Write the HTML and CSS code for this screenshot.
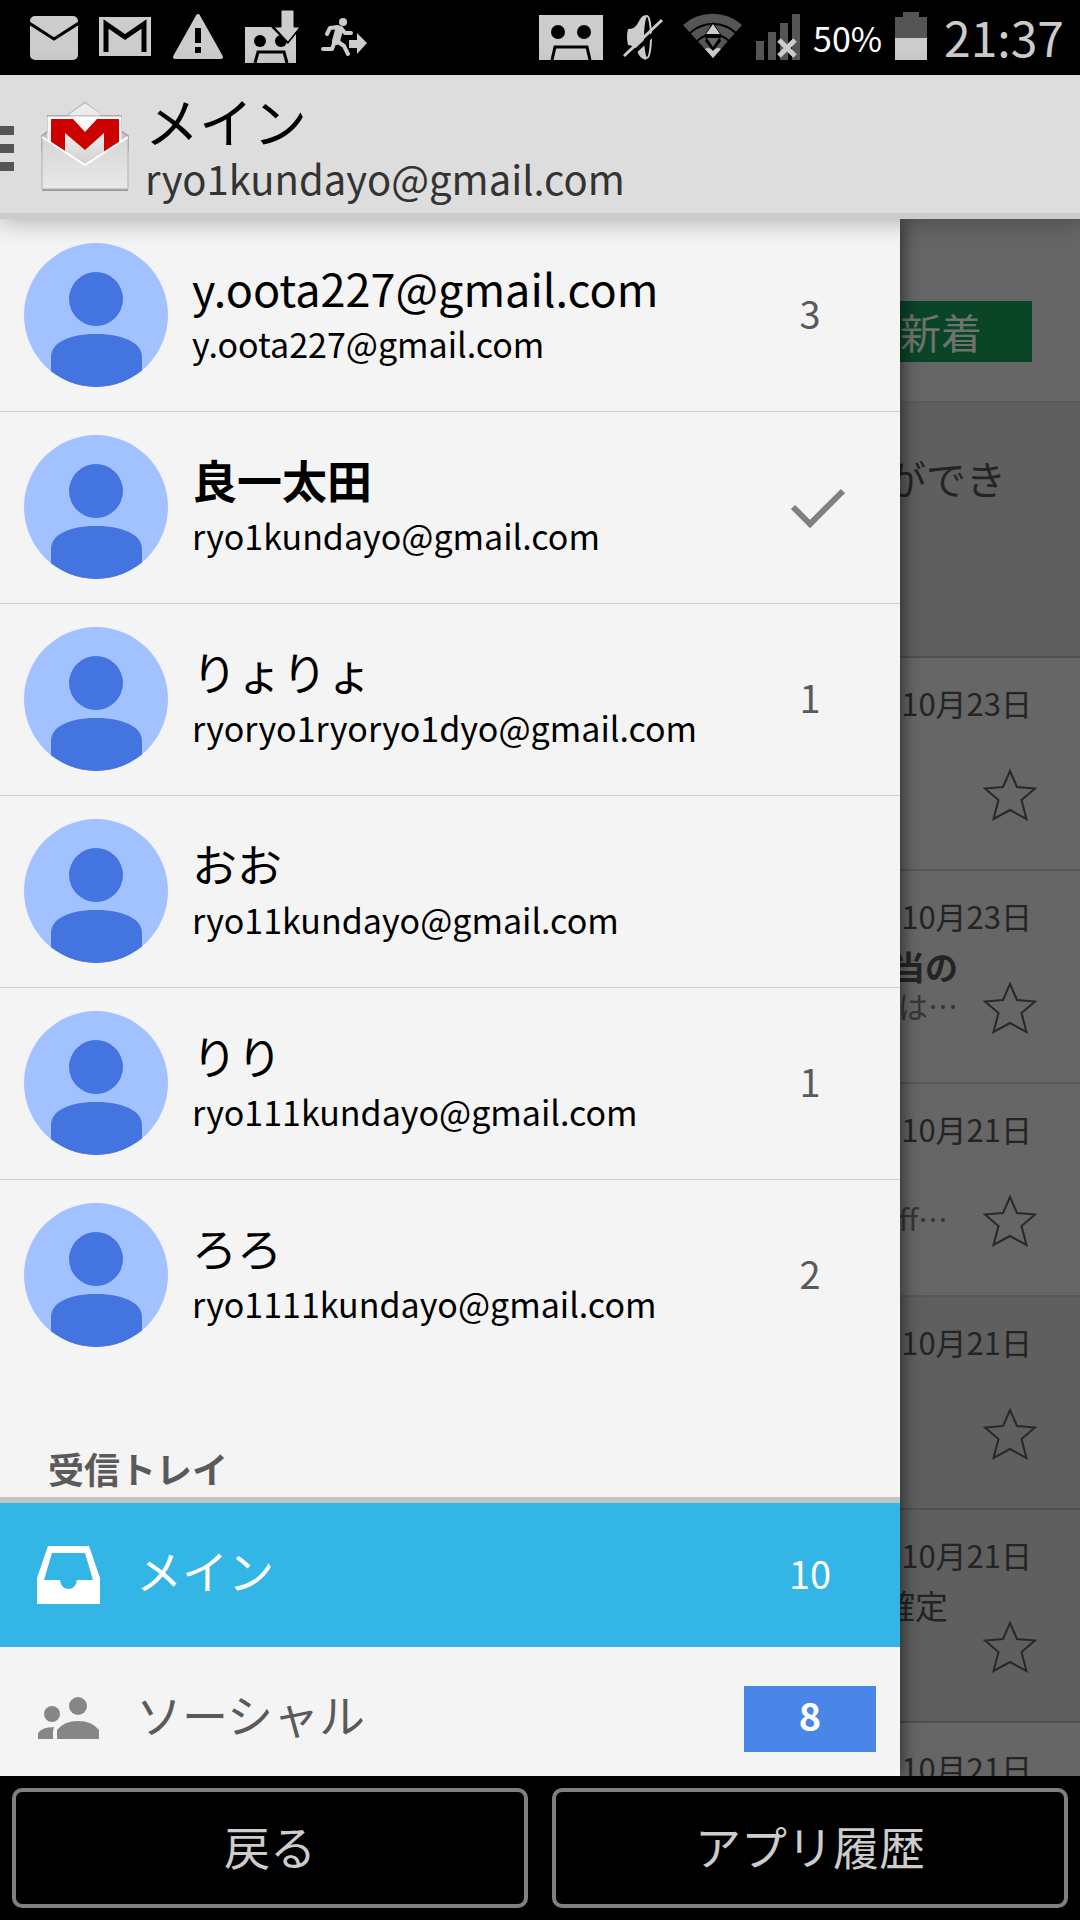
FILE: index.html
```html
<!DOCTYPE html>
<html lang="ja">
  <head>
    <meta charset="UTF-8" />
    <meta name="viewport" content="width=device-width, initial-scale=1.0" />
    <title>メイン</title>
    <link rel="stylesheet" href="styles.css">
  </head>
  <body>
    <!-- Shared shapes -->
    <svg class="defs" aria-hidden="true">
      <symbol id="avatar" viewBox="0 0 144 144">
        <clipPath id="round"><circle cx="72" cy="72" r="72" /></clipPath>
        <g clip-path="url(#round)">
          <rect width="144" height="144" fill="#a1c2ff" />
          <circle cx="72" cy="56" r="27" fill="#4374e0" />
          <path d="M27 144V114C27 98 49 91 72 91S118 98 118 114V144Z" fill="#4374e0" />
        </g>
      </symbol>
      <symbol id="star" viewBox="0 0 56 54">
        <path d="M28 3L35 19L53 20.500L39.500 32L44.500 51L28 42L11.500 51L16.500 32L3 20.500L21 19Z" fill="none" stroke="#282828" stroke-width="2" />
      </symbol>
    </svg>

    <div class="screen">
      <!-- Status bar -->
      <div class="status-bar">
        <div class="notifications">
          <svg width="48" height="75" viewBox="30 0 48 75">
            <rect x="30" y="16" width="48" height="44" rx="5" fill="#ccc" />
            <path d="M29 23L54 39L79 23" fill="none" stroke="#000" stroke-width="3" />
          </svg>
          <svg width="52" height="75" viewBox="99 0 52 75">
            <rect x="99" y="17" width="52" height="39" fill="#ccc" />
            <path d="M106 52V24L125 37L144 24V52" fill="none" stroke="#000" stroke-width="5" />
          </svg>
          <svg width="52" height="75" viewBox="172 0 52 75">
            <path d="M198 16L221 57H175Z" fill="#ccc" stroke="#ccc" stroke-width="4" stroke-linejoin="round" />
            <path d="M198 28V43M198 47V53" stroke="#000" stroke-width="6" />
          </svg>
          <svg width="55" height="75" viewBox="242 0 55 75">
            <path d="M242 27H268L285 44L293 34V63H242Z" fill="#ccc" />
            <circle cx="257" cy="41" r="6" />
            <circle cx="278" cy="41" r="6" />
            <path d="M252 63L255 52H281L284 63" fill="none" stroke="#000" stroke-width="3" />
            <path d="M278 10H291V27H297L285 42L271 27H278Z" fill="#ccc" stroke="#000" stroke-width="1" />
          </svg>
          <svg width="46" height="75" viewBox="320 0 46 75">
            <circle cx="342" cy="22" r="4" fill="#ccc" />
            <path d="M338 30L335 41" stroke="#ccc" stroke-width="8" stroke-linecap="round" />
            <path d="M337 27L329 28L326 34M340 28L344 33L350 33M334 41L331 49H322M336 41L343 46L347 54" fill="none" stroke="#ccc" stroke-width="4" stroke-linecap="round" stroke-linejoin="round" />
            <path d="M348 40H356V33L366 43L356 54V48H348Z" fill="#ccc" />
          </svg>
        </div>
        <div class="system">
          <svg width="64" height="75" viewBox="539 0 64 75">
            <rect x="539" y="15" width="64" height="45" fill="#ccc" />
            <circle cx="558" cy="32" r="7" />
            <circle cx="584" cy="32" r="7" />
            <path d="M552 60L555 47H587L590 60" fill="none" stroke="#000" stroke-width="3" />
          </svg>
          <svg width="54" height="75" viewBox="617 0 54 75">
            <path d="M629 29Q636 30 640 21Q643 15 647 15V60Q641 59 638 51Q635 45 629 45Q627 37 629 29Z" fill="#ccc" />
            <ellipse cx="648" cy="37" rx="4" ry="21" fill="#000" stroke="#ccc" stroke-width="2" />
            <path d="M627 60L665 24" stroke="#000" stroke-width="4" />
            <path d="M625 56L663 20" stroke="#ccc" stroke-width="3" />
          </svg>
          <svg width="60" height="75" viewBox="685 0 60 75">
            <path d="M685 25A44 44 0 0 1 744 25L715 58Z" fill="#555" />
            <path d="M692 33A34 34 0 0 1 738 33M699 41A23 23 0 0 1 731 41" fill="none" stroke="#000" stroke-width="2" />
            <path d="M706 36L715 22L724 36L722 39L723 41L715 51L707 41L708 39Z" fill="#000" />
            <path d="M708 34L715 24L722 34ZM707 49Q711 46 715 51Q719 46 723 49L715 58Z" fill="#ccc" />
            <path d="M709 38H721L715 47Z" fill="#666" />
          </svg>
          <svg width="44" height="75" viewBox="755 0 44 75">
            <path d="M755 41H763V60H755ZM767 32H775V60H767ZM779 23H787V60H779ZM791 14H799V60H791Z" fill="#555" />
            <path d="M778 40L794 56M794 40L778 56" stroke="#ccc" stroke-width="5" />
          </svg>
          <span class="battery-level">50%</span>
          <svg width="32" height="75" viewBox="892 0 32 75">
            <path d="M892 17H900V12H916V17H924V38H892Z" fill="#555" />
            <rect x="892" y="38" width="32" height="22" fill="#ccc" />
          </svg>
          <time class="clock">21:37</time>
        </div>
      </div>

      <!-- Action bar -->
      <header class="action-bar">
        <button class="menu-button" type="button" aria-label="メニュー">
          <svg width="14" height="45" viewBox="0 0 14 45">
            <path d="M0 0H14V9H0ZM0 18H14V27H0ZM0 36H14V45H0Z" fill="#555" />
          </svg>
        </button>
        <svg class="logo" width="90" height="96" viewBox="40 98 90 96">
          <defs>
            <linearGradient id="paper" x1="0" y1="0" x2="0" y2="1">
              <stop offset="0" stop-color="#fff" />
              <stop offset="1" stop-color="#ccc" />
            </linearGradient>
            <linearGradient id="envelope" x1="0" y1="0" x2="0" y2="1">
              <stop offset="0" stop-color="#d6d6d6" />
              <stop offset="1" stop-color="#e8e8e8" />
            </linearGradient>
          </defs>
          <path d="M42 190H128" stroke="#999" stroke-width="2" />
          <path d="M42 136L48 131V116H67L85 103L102 116H121V131L128 136V150H42Z" fill="#c4c4c4" stroke="#aaa" stroke-width="2" />
          <path d="M68 115L85 103L102 115Z" fill="#ececec" />
          <path d="M48 117H121V145L85 168L48 145Z" fill="url(#paper)" stroke="#fafafa" stroke-width="1" />
          <path d="M51 119H73L85 132L97 119H119V154H104V133L85 150L65 133V154H51Z" fill="#cd0000" />
          <path d="M42 137L85 165L128 137V189H42Z" fill="url(#envelope)" stroke="#b0b0b0" stroke-width="1" />
          <path d="M42 137L85 165L128 137" fill="none" stroke="#fff" stroke-width="2" />
        </svg>
        <div class="title">
          <h1>メイン</h1>
          <p>ryo1kundayo@gmail.com</p>
        </div>
      </header>

      <div class="stage">
        <!-- Mail list, dimmed under the drawer -->
        <main class="mail-list">
          <div class="promo"><span class="new-badge">新着</span></div>
          <div class="tip">ができ</div>
          <article class="mail">
            <time>10月23日</time>
            <div class="excerpt"></div>
            <button class="star" type="button" aria-label="スター"><svg><use href="#star" /></svg></button>
          </article>
          <article class="mail">
            <time>10月23日</time>
            <div class="excerpt"><strong>当の</strong><span>りは…</span></div>
            <button class="star" type="button" aria-label="スター"><svg><use href="#star" /></svg></button>
          </article>
          <article class="mail">
            <time>10月21日</time>
            <div class="excerpt short"><b></b><span>ff…</span></div>
            <button class="star" type="button" aria-label="スター"><svg><use href="#star" /></svg></button>
          </article>
          <article class="mail read">
            <time>10月21日</time>
            <div class="excerpt"></div>
            <button class="star" type="button" aria-label="スター"><svg><use href="#star" /></svg></button>
          </article>
          <article class="mail read">
            <time>10月21日</time>
            <div class="excerpt short"><b>確定</b></div>
            <button class="star" type="button" aria-label="スター"><svg><use href="#star" /></svg></button>
          </article>
          <article class="mail">
            <time>10月21日</time>
          </article>
        </main>

        <!-- Navigation drawer -->
        <nav class="drawer">
          <ul class="accounts">
            <li>
              <a class="account" href="#">
                <svg class="avatar"><use href="#avatar" /></svg>
                <span class="who"><span class="name">y.oota227@gmail.com</span><span class="email">y.oota227@gmail.com</span></span>
                <span class="count">3</span>
              </a>
            </li>
            <li>
              <a class="account current" href="#">
                <svg class="avatar"><use href="#avatar" /></svg>
                <span class="who"><span class="name">良一太田</span><span class="email">ryo1kundayo@gmail.com</span></span>
                <svg class="check" width="132" height="60" viewBox="0 0 132 60">
                  <path d="M49 30L66 47L99 14" fill="none" stroke="#808080" stroke-width="6" />
                </svg>
              </a>
            </li>
            <li>
              <a class="account" href="#">
                <svg class="avatar"><use href="#avatar" /></svg>
                <span class="who"><span class="name">りょりょ</span><span class="email">ryoryo1ryoryo1dyo@gmail.com</span></span>
                <span class="count">1</span>
              </a>
            </li>
            <li>
              <a class="account" href="#">
                <svg class="avatar"><use href="#avatar" /></svg>
                <span class="who"><span class="name">おお</span><span class="email">ryo11kundayo@gmail.com</span></span>
              </a>
            </li>
            <li>
              <a class="account" href="#">
                <svg class="avatar"><use href="#avatar" /></svg>
                <span class="who"><span class="name">りり</span><span class="email">ryo111kundayo@gmail.com</span></span>
                <span class="count">1</span>
              </a>
            </li>
            <li>
              <a class="account" href="#">
                <svg class="avatar"><use href="#avatar" /></svg>
                <span class="who"><span class="name">ろろ</span><span class="email">ryo1111kundayo@gmail.com</span></span>
                <span class="count">2</span>
              </a>
            </li>
          </ul>

          <h2>受信トレイ</h2>
          <a class="folder active" href="#">
            <svg width="64" height="60" viewBox="0 0 64 60">
              <path fill="#fff" fill-rule="evenodd" d="M12 1H53L64 33V59H1V33ZM16 8L8 35H24C25 47 40 47 41 35H57L49 8Z" />
            </svg>
            <span class="label">メイン</span>
            <span class="count">10</span>
          </a>
          <a class="folder" href="#">
            <svg width="64" height="60" viewBox="0 0 64 60">
              <g fill="#868686">
                <circle cx="16" cy="25" r="8" />
                <circle cx="42" cy="17" r="9" />
                <path d="M2 50V44Q6 38 18 38Q17 41 17 44V50ZM21 50V41Q28 32 42 32T63 41V50Z" />
              </g>
            </svg>
            <span class="label">ソーシャル</span>
            <span class="count badge">8</span>
          </a>
        </nav>
      </div>

      <!-- System buttons -->
      <footer class="system-nav">
        <button type="button">戻る</button>
        <button type="button">アプリ履歴</button>
      </footer>
    </div>
  </body>
</html>
```
FILE: styles.css
```css
* {
  box-sizing: border-box;
}

body {
  margin: 0;
  background: #000;
  font-family: "Noto Sans CJK JP", sans-serif;
}

h1,
h2,
p,
ul {
  margin: 0;
  padding: 0;
}

a {
  color: inherit;
  text-decoration: none;
}

button {
  font-family: inherit;
  cursor: pointer;
}

.defs {
  position: absolute;
  width: 0;
  height: 0;
}

.screen {
  display: flex;
  flex-direction: column;
  height: 100vh;
}

/* Status bar */
.status-bar {
  display: flex;
  justify-content: space-between;
  height: 75px;
  padding: 0 16px 0 30px;
  background: #000;
  color: #ccc;
}

.notifications,
.system {
  display: flex;
  align-items: center;
}

.notifications {
  gap: 21px;
}

.system {
  gap: 13px;
}

.battery-level {
  color: #fff;
  font-size: 34px;
}

.clock {
  margin-left: 4px;
  font-size: 48px;
  line-height: 70px;
  padding-bottom: 4px;
}

/* Action bar */
.action-bar {
  display: flex;
  align-items: center;
  height: 144px;
  padding-top: 4px;
  background: #ddd;
  border-bottom: 6px solid #ccc;
  box-shadow: 0 2px 24px rgba(0, 0, 0, 0.3);
  position: relative;
  z-index: 2;
}

.menu-button {
  display: flex;
  padding: 4px 0 0;
  border: none;
  background: none;
}

.logo {
  margin-left: 26px;
}

.title {
  margin-left: 15px;
}

.title h1 {
  font-size: 54px;
  font-weight: 400;
  line-height: 64px;
  color: #000;
}

.title p {
  font-size: 40px;
  line-height: 50px;
  color: #333;
}

/* Area below the action bar */
.stage {
  position: relative;
  flex: 1;
  min-height: 0;
  overflow: hidden;
  background: #666;
}

.mail-list {
  color: #242424;
}

.promo {
  display: flex;
  justify-content: flex-end;
  align-items: flex-start;
  height: 184px;
  padding: 82px 48px 0 0;
  border-bottom: 2px solid #5a5a5a;
}

.new-badge {
  padding: 0 50px;
  background: #0a4528;
  color: #6f736f;
  font-size: 41px;
  line-height: 61px;
}

.tip {
  height: 255px;
  padding: 45px 74px 0 0;
  border-bottom: 2px solid #505050;
  background: #5f5f5f;
  font-size: 40px;
  line-height: 60px;
  text-align: right;
}

.mail {
  display: grid;
  grid-template-columns: 1fr 56px;
  grid-template-rows: 44px 1fr;
  column-gap: 24px;
  height: 213px;
  padding: 23px 42px 20px 0;
  border-bottom: 2px solid #585858;
}

.mail.read {
  background: #5f5f5f;
  border-color: #505050;
}

.mail time {
  grid-column: 1 / 3;
  padding-right: 6px;
  font-size: 31px;
  line-height: 44px;
  text-align: right;
}

.excerpt {
  display: flex;
  flex-direction: column;
  padding-top: 8px;
  font-size: 33px;
  line-height: 40px;
  text-align: right;
}

.excerpt span {
  font-size: 30px;
  line-height: 38px;
  color: #363636;
}

.excerpt.short {
  padding-right: 10px;
}

.excerpt b {
  min-height: 40px;
  font-weight: 400;
}

.star {
  align-self: start;
  margin-top: 43px;
  padding: 0;
  border: none;
  background: none;
}

.star svg {
  display: block;
  width: 56px;
  height: 54px;
}

/* Drawer */
.drawer {
  position: absolute;
  top: 0;
  bottom: 0;
  left: 0;
  right: 180px;
  background: #f4f4f4;
  box-shadow: 0 0 18px rgba(0, 0, 0, 0.7);
  color: #000;
}

.accounts {
  padding-top: 1px;
  list-style: none;
}

.account {
  display: flex;
  align-items: center;
  gap: 24px;
  height: 192px;
  padding: 0 24px 1px;
  border-bottom: 1px solid #d0d0d0;
}

.accounts li:last-child .account {
  border-color: transparent;
}

.avatar {
  flex: none;
  width: 144px;
  height: 144px;
}

.who {
  display: flex;
  flex: 1;
  flex-direction: column;
}

.name {
  font-size: 45px;
  line-height: 58px;
}

.current .name {
  font-weight: 700;
}

.email {
  font-size: 34px;
  line-height: 54px;
}

.count {
  width: 132px;
  padding-bottom: 4px;
  font-size: 38px;
  line-height: 62px;
  text-align: center;
  color: #5a5a5a;
}

.drawer h2 {
  height: 131px;
  padding: 72px 48px 0;
  border-bottom: 6px solid #c4c4c4;
  color: #5a5a5a;
  font-size: 36px;
  line-height: 48px;
}

.folder {
  display: flex;
  align-items: center;
  height: 144px;
  padding: 0 24px 0 36px;
  color: #5a5a5a;
}

.folder.active {
  background: #33b5e5;
  color: #fff;
}

.label {
  flex: 1;
  margin-left: 36px;
  padding-bottom: 12px;
  font-size: 46px;
  line-height: 60px;
}

.folder.active .count,
.badge {
  color: #fff;
}

.badge {
  padding-bottom: 8px;
  line-height: 58px;
  background: #4a86e8;
  font-weight: 700;
}

/* System buttons */
.system-nav {
  display: flex;
  gap: 24px;
  height: 144px;
  padding: 12px;
  background: #000;
}

.system-nav button {
  flex: 1;
  padding: 0 0 6px;
  border: 4px solid #808080;
  border-radius: 10px;
  background: #000;
  color: #ccc;
  font-size: 46px;
}
```
